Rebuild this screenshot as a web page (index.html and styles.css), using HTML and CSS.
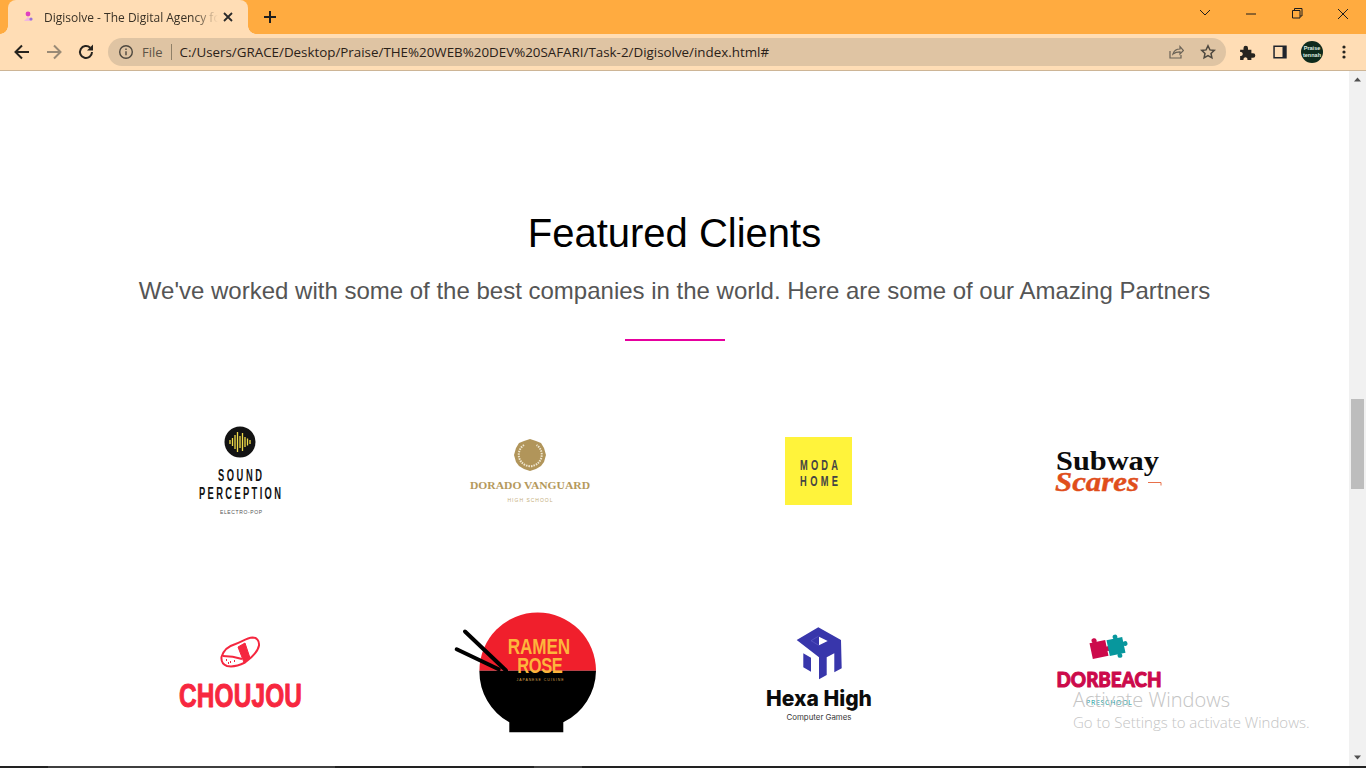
FILE: index.html
```html
<!DOCTYPE html>
<html lang="en">
<head>
<meta charset="utf-8">
<title>Digisolve - The Digital Agency for</title>
<link rel="stylesheet" href="styles.css">
</head>
<body>
<div class="browser">
  <div class="tabbar">
    <div class="tab">
      <svg class="favicon" viewBox="0 0 16 16"><circle cx="8" cy="5" r="2.4" fill="#e040c0"/><path d="M4 12l4-4 4 4z" fill="#f0b8e0"/><circle cx="11" cy="10" r="1.6" fill="#9a70d8"/></svg>
      <span class="tab-title">Digisolve - The Digital Agency for</span>
      <svg class="tab-close" viewBox="0 0 10 10"><path d="M1 1l8 8M9 1l-8 8"/></svg>
    </div>
    <svg class="new-tab" viewBox="0 0 14 14"><path d="M7 1v12M1 7h12"/></svg>
    <div class="window-controls">
      <svg class="win-btn" viewBox="0 0 46 28"><path d="M18 10l5 5 5-5"/></svg>
      <svg class="win-btn" viewBox="0 0 46 28"><path d="M18 14h10"/></svg>
      <svg class="win-btn" viewBox="0 0 46 28"><path d="M18.500 10.500h7.500v7.500h-7.500zM20.500 10.500v-2h7.500v7.500h-2"/></svg>
      <svg class="win-btn" viewBox="0 0 46 28"><path d="M18 9l10 10M28 9l-10 10"/></svg>
    </div>
  </div>
  <div class="toolbar">
    <button class="tool"><svg viewBox="0 0 20 20" class="ico"><path d="M17 10H4M10 3.500L3.500 10l6.500 6.500"/></svg></button>
    <button class="tool"><svg viewBox="0 0 20 20" class="ico ico-off"><path d="M3 10h13M10 3.500l6.500 6.500-6.500 6.500"/></svg></button>
    <button class="tool"><svg viewBox="0 0 20 20" class="ico"><path d="M16 10a6 6 0 1 1-1.800-4.300"/><path class="solid" d="M17 2.500v6h-6z"/></svg></button>
    <div class="omnibox">
      <svg class="info" viewBox="0 0 16 16"><circle cx="8" cy="8" r="6.300"/><path d="M8 7.200v4M8 4.400v1.600"/></svg>
      <span class="scheme">File</span>
      <span class="omni-sep"></span>
      <span class="url">C:/Users/GRACE/Desktop/Praise/THE%20WEB%20DEV%20SAFARI/Task-2/Digisolve/index.html#</span>
      <svg class="omni-ico" viewBox="0 0 16 16"><path d="M2 7v7h11v-3M5 10c1-3.500 4-5 7-5V2.500L15.500 6.500 12 10V7.800c-3 0-5 .6-7 2.200z"/></svg>
      <svg class="omni-ico star" viewBox="0 0 16 16"><path d="M8 1.800l1.900 4.100 4.400.5-3.300 3 .9 4.400L8 11.600l-3.900 2.200.9-4.400-3.300-3 4.400-.5z"/></svg>
    </div>
    <button class="tool first-ext"><svg viewBox="0 0 16 16" class="ext-ico"><path d="M1 6h3V4.500a2 2 0 0 1 4 0V6h3v3h1.500a2 2 0 0 1 0 4H11v2H7.500v-1a1.800 1.800 0 0 0-3.500 0v1H1v-3.500h1a1.800 1.800 0 0 0 0-3.500H1z"/></svg></button>
    <button class="tool"><svg viewBox="0 0 16 16" class="panel-ico"><path fill-rule="evenodd" d="M1.300 1.500h13.400v13H1.300zM2.800 3v10h7.700V3z"/></svg></button>
    <button class="tool"><span class="avatar"><span class="avatar-line">Praise</span><span class="avatar-line">tennah</span></span></button>
    <button class="tool"><svg viewBox="0 0 16 16" class="fill-ico"><circle cx="8" cy="3" r="1.600"/><circle cx="8" cy="8" r="1.600"/><circle cx="8" cy="13" r="1.600"/></svg></button>
  </div>
  <div class="viewport">
    <main class="page">
      <h2 class="title">Featured Clients</h2>
      <p class="subtitle">We've worked with some of the best companies in the world. Here are some of our Amazing Partners</p>
      <div class="divider"></div>
      <div class="clients">
        <div class="client">
          <svg viewBox="96 370 289 201">
            <circle cx="240" cy="442" r="15.500" fill="#131313"/>
            <path class="bars" d="M230 440v4M232.500 438v8M235 435v14M237.500 432v20M240 436v12M242.500 433v18M245 437v10M247.500 438.500v7M250 440v4"/>
            <g transform="translate(240 481) scale(.55 1)"><text class="t-sound" textLength="80">SOUND</text></g>
            <g transform="translate(240 498.500) scale(.55 1)"><text class="t-sound" textLength="149">PERCEPTION</text></g>
            <text class="t-sound-sm" x="241" y="514" textLength="42">ELECTRO-POP</text>
          </svg>
        </div>
        <div class="client">
          <svg viewBox="385 370 289 201">
            <path class="gold" d="M530 439l6 2 5 2 3 5 2 7-2 7-3 4-5 3-6 2-6-2-5-3-3-4-2-7 2-7 3-5 5-2z"/>
            <path class="wreath" d="M524 445a11.500 11.500 0 1 0 12.500 0"/>
            <text class="t-dorado" x="530" y="489" textLength="120" lengthAdjust="spacingAndGlyphs">DORADO VANGUARD</text>
            <text class="t-dorado-sm" x="530" y="502" textLength="45">HIGH SCHOOL</text>
          </svg>
        </div>
        <div class="client">
          <svg viewBox="674 370 289 201">
            <rect x="785" y="437" width="67" height="68" fill="#fff33b"/>
            <g transform="translate(819 470) scale(.6 1)"><text class="t-moda" textLength="63">MODA</text></g>
            <g transform="translate(819 486) scale(.6 1)"><text class="t-moda" textLength="63">HOME</text></g>
          </svg>
        </div>
        <div class="client">
          <svg viewBox="963 370 289 201">
            <text class="t-subway" x="1056" y="470" textLength="103" lengthAdjust="spacingAndGlyphs">Subway</text>
            <text class="t-scares" x="1055" y="491" textLength="84" lengthAdjust="spacingAndGlyphs">Scares</text>
            <path class="scares-line" d="M1148 482.500h13v3"/>
          </svg>
        </div>
        <div class="client">
          <svg viewBox="96 571 289 201">
            <g class="sushi">
              <path d="M221.500 657c2-7 7-11 14-13 6-2 11-6 17-6.500 4 0 7 3 6.500 8-1 6-6 11-14 17-6 3-12 5-18 3.500-4-1.500-6-4-5.500-9z"/>
              <path d="M223 656c6 0 13 1 19 3"/>
              <path class="sushi-band" d="M238 647l7-4 5 15-6 4.500z"/>
              <path d="M226 660h1M230 662h1M234 661h1M228 663h1"/>
            </g>
            <g transform="translate(240.500 707) scale(.74 1)"><text class="t-chou" textLength="166">CHOUJOU</text></g>
          </svg>
        </div>
        <div class="client">
          <svg viewBox="385 571 289 201">
            <path fill="#f01f2c" d="M479.400 670.800a58.300 58.300 0 0 1 116.600 0z"/>
            <path fill="#000" d="M479.400 670.800h116.600a58.300 58.300 0 0 1-32.700 51.500v10h-54v-10a58.300 58.300 0 0 1-29.900-51.500z"/>
            <path class="sticks" d="M465 631.500l41 39M456.700 649.300l42 20"/>
            <g transform="translate(539 653.500) scale(.78 1)"><text class="t-ramen" textLength="80">RAMEN</text></g>
            <g transform="translate(540 672.500) scale(.75 1)"><text class="t-ramen" textLength="61">ROSE</text></g>
            <text class="t-ramen-sm" x="540" y="681" textLength="47">JAPANESE CUISINE</text>
          </svg>
        </div>
        <div class="client">
          <svg viewBox="674 571 289 201">
            <path fill="#3836ab" d="M796.700 640l21.600-12.700 22.700 12.700.7 28.300-7.400 4v-19l-7.600 4v17.700l-7.700 4.300v-22z"/>
            <path fill="#3836ab" d="M803.300 653.300l7.700 4.400v14l-7.700-4.400z"/>
            <path class="hexa-line" d="M811 640.700l7.500-4.500M819 645.500l-8-4.800"/>
            <path fill="#fff" d="M819 636.700l8.700 4.300-8.700 4.300z"/>
            <text class="t-hexa" x="819" y="706" textLength="106" lengthAdjust="spacingAndGlyphs">Hexa High</text>
            <text class="t-hexa-sm" x="819" y="720" textLength="65" lengthAdjust="spacingAndGlyphs">Computer Games</text>
          </svg>
        </div>
        <div class="client">
          <svg viewBox="963 571 289 201">
            <g transform="translate(1099 649.500) rotate(-12)" fill="#cc0a4b">
              <rect x="-8" y="-8" width="16" height="16"/>
              <circle cx="-3" cy="-9.500" r="2.600"/>
              <circle cx="9" cy="1" r="2.400"/>
            </g>
            <g transform="translate(1116 646.500) rotate(-12)" fill="#07979d">
              <rect x="-8" y="-8" width="16" height="16"/>
              <circle cx="1" cy="-9.500" r="2.400"/>
              <circle cx="9.500" cy="-1" r="2.400"/>
              <circle cx="2" cy="9.500" r="2.400"/>
            </g>
            <text class="t-dorbeach" x="1109" y="686.500" textLength="105" lengthAdjust="spacingAndGlyphs">DORBEACH</text>
            <text class="t-dorbeach-sm" x="1109" y="705" textLength="46">PRESCHOOL</text>
          </svg>
        </div>
      </div>
    </main>
    <div class="scrollbar">
      <svg class="arrow" viewBox="0 0 17 17"><path d="M5 10.500l3.500-4 3.500 4z"/></svg>
      <div class="track"><div class="thumb"></div></div>
      <svg class="arrow" viewBox="0 0 17 17"><path d="M5 6.500l3.500 4 3.500-4z"/></svg>
    </div>
    <div class="activation">
      <div class="act-title">Activate Windows</div>
      <div class="act-sub">Go to Settings to activate Windows.</div>
    </div>
  </div>
  <div class="taskbar"><span class="task-a"></span><span class="task-b"></span></div>
</div>
</body>
</html>
```
FILE: styles.css
```css
* { box-sizing: border-box; }
html, body { margin: 0; height: 100%; overflow: hidden; background: #fff; }
body { font-family: "Liberation Sans", Arial, sans-serif; }
.browser { width: 1366px; height: 768px; display: flex; flex-direction: column; }

.tabbar { height: 34px; background: #ffab40; display: flex; align-items: flex-start; flex: none; }
.tab { position: relative; width: 240px; height: 34px; margin-left: 8px; background: #ffddb5; border-radius: 8px 8px 0 0; display: flex; align-items: center; padding: 0 10px 0 12px; }
.tab::before, .tab::after { content: ""; position: absolute; bottom: 0; width: 8px; height: 8px; }
.tab::before { left: -8px; background: radial-gradient(circle at 0 0, #ffab40 7.500px, #ffddb5 8px); }
.tab::after { right: -8px; background: radial-gradient(circle at 100% 0, #ffab40 7.500px, #ffddb5 8px); }
.favicon { width: 16px; height: 16px; flex: none; }
.tab-title { margin-left: 8px; width: 174px; font: 12px "Open Sans", sans-serif; color: #3a3226; white-space: nowrap; overflow: hidden; -webkit-mask-image: linear-gradient(to right, #000 150px, transparent 174px); mask-image: linear-gradient(to right, #000 150px, transparent 174px); }
.tab-close { width: 10px; height: 10px; margin-left: 5px; flex: none; fill: none; stroke: #2a2a2a; stroke-width: 1.800; }
.new-tab { width: 14px; height: 14px; margin: 10px 0 0 15px; fill: none; stroke: #1e1e1e; stroke-width: 2; flex: none; }
.window-controls { margin-left: auto; display: flex; }
.win-btn { width: 46px; height: 28px; fill: none; stroke: #1c1c1c; stroke-width: 1; }

.toolbar { height: 37px; background: #ffddb5; border-bottom: 1px solid #cdb596; display: flex; align-items: center; padding: 0 6px; flex: none; }
.tool { width: 32px; height: 32px; padding: 0; margin: 0; border: 0; background: none; display: flex; align-items: center; justify-content: center; flex: none; }
.ico { width: 20px; height: 20px; fill: none; stroke: #26231e; stroke-width: 2; }
.ico .solid { fill: #26231e; stroke: none; }
.ico-off { stroke: #998a76; }
.fill-ico { width: 16px; height: 16px; fill: #26241f; }
.ext-ico { width: 18px; height: 18px; fill: #26241f; }
.panel-ico { width: 16px; height: 16px; fill: #20242c; }
.first-ext { margin-left: 6px; }
.omnibox { flex: 1; height: 28px; margin-left: 6px; background: #dfc4a3; border-radius: 14px; display: flex; align-items: center; padding: 0 10px; min-width: 0; }
.info { width: 16px; height: 16px; fill: none; stroke: #4e483f; stroke-width: 1.400; flex: none; }
.scheme { margin-left: 8px; font: 13px "Open Sans", sans-serif; color: #5c5346; }
.omni-sep { width: 1px; height: 16px; background: #8f8068; margin: 0 8px; flex: none; }
.url { font: 13.360px "Open Sans", sans-serif; color: #2a2118; white-space: nowrap; flex: 1; }
.omni-ico { width: 16px; height: 16px; fill: none; stroke: #6a6256; stroke-width: 1.200; flex: none; margin-left: 16px; }
.star { stroke-width: 1.500; stroke: #4e483f; }
.avatar { width: 22px; height: 22px; border-radius: 50%; background: #0e2a1c; display: flex; flex-direction: column; align-items: center; justify-content: center; overflow: hidden; }
.avatar-line { font: bold 5.500px/7px "Liberation Sans", sans-serif; color: #dfeee3; }

.viewport { position: relative; flex: 1; display: flex; min-height: 0; }
.page { flex: 1; height: 100%; overflow: hidden; padding-top: 139px; text-align: center; color: #000; }
.title { margin: 0; font: 400 40px/46px "Liberation Sans", sans-serif; color: #000; }
.subtitle { margin: 21px 0 0; font: 24px/28px "Liberation Sans", sans-serif; color: #555; }
.divider { width: 100px; height: 2px; margin: 34px auto 29px; background: #e6009e; }
.clients { display: grid; grid-template-columns: repeat(4, 289px); grid-auto-rows: 201px; padding-left: 96px; }
.client { width: 289px; height: 201px; }
.client svg { display: block; width: 289px; height: 201px; }

.bars { fill: none; stroke: #f2dc4a; stroke-width: 1.300; }
.t-sound { font: 700 17px "Liberation Sans", sans-serif; fill: #111; text-anchor: middle; }
.t-sound-sm { font: 5px "Liberation Sans", sans-serif; fill: #555; text-anchor: middle; }
.gold { fill: #b1955a; }
.wreath { fill: none; stroke: #efe6cf; stroke-width: 2; stroke-dasharray: 1.500 1; }
.t-dorado { font: 700 11px "Liberation Serif", serif; fill: #b5995c; text-anchor: middle; }
.t-dorado-sm { font: 5px "Liberation Sans", sans-serif; fill: #c4ae7c; text-anchor: middle; }
.t-moda { font: 700 15.500px "Liberation Sans", sans-serif; fill: #444; text-anchor: middle; }
.t-subway { font: 700 28px "Liberation Serif", serif; fill: #0c0c0c; }
.t-scares { font: italic 700 28px "Liberation Serif", serif; fill: #e04e1b; stroke: #e04e1b; stroke-width: .4; }
.scares-line { fill: none; stroke: #e8704a; stroke-width: 1; }
.sushi path { fill: none; stroke: #f5273f; stroke-width: 2; }
.sushi .sushi-band { fill: #f5273f; stroke-width: 1; }
.t-chou { font: 700 33px "Liberation Sans", sans-serif; fill: #f7273f; stroke: #f7273f; stroke-width: 1; stroke-linejoin: round; text-anchor: middle; }
.sticks { fill: none; stroke: #000; stroke-width: 4; stroke-linecap: round; }
.t-ramen { font: 700 22px "Liberation Sans", sans-serif; fill: #fdb53c; text-anchor: middle; }
.t-ramen-sm { font: 3.500px "Liberation Sans", sans-serif; fill: #d8a24a; text-anchor: middle; }
.hexa-line { fill: none; stroke: #6361c8; stroke-width: .6; }
.t-hexa { font: 800 22px Inter, "Liberation Sans", sans-serif; fill: #0c0c0c; text-anchor: middle; }
.t-hexa-sm { font: 7.500px Inter, "Liberation Sans", sans-serif; fill: #333; text-anchor: middle; }
.t-dorbeach { font: 900 21px Lato, "Liberation Sans", sans-serif; fill: #cc0a4b; stroke: #cc0a4b; stroke-width: 1; stroke-linejoin: round; text-anchor: middle; }
.t-dorbeach-sm { font: 7px "Open Sans", sans-serif; fill: #07979d; text-anchor: middle; }

.scrollbar { width: 17px; background: #f1f1f1; display: flex; flex-direction: column; flex: none; }
.arrow { width: 17px; height: 17px; flex: none; fill: #505050; }
.track { flex: 1; padding: 311px 2px 0; }
.thumb { height: 90px; background: #bdbdbd; }

.activation { position: absolute; left: 1073px; top: 616px; color: #c4c4c4; pointer-events: none; white-space: nowrap; }
.act-title { font: 300 20px/26px "Open Sans", sans-serif; }
.act-sub { font: 300 15px/20px "Open Sans", sans-serif; margin-top: -1px; }

.taskbar { height: 2px; background: #222; flex: none; display: flex; }
.task-a { width: 287px; margin-left: 48px; background: #3f3f3f; }
.task-b { width: 48px; margin-left: 199px; background: #444; }
```
